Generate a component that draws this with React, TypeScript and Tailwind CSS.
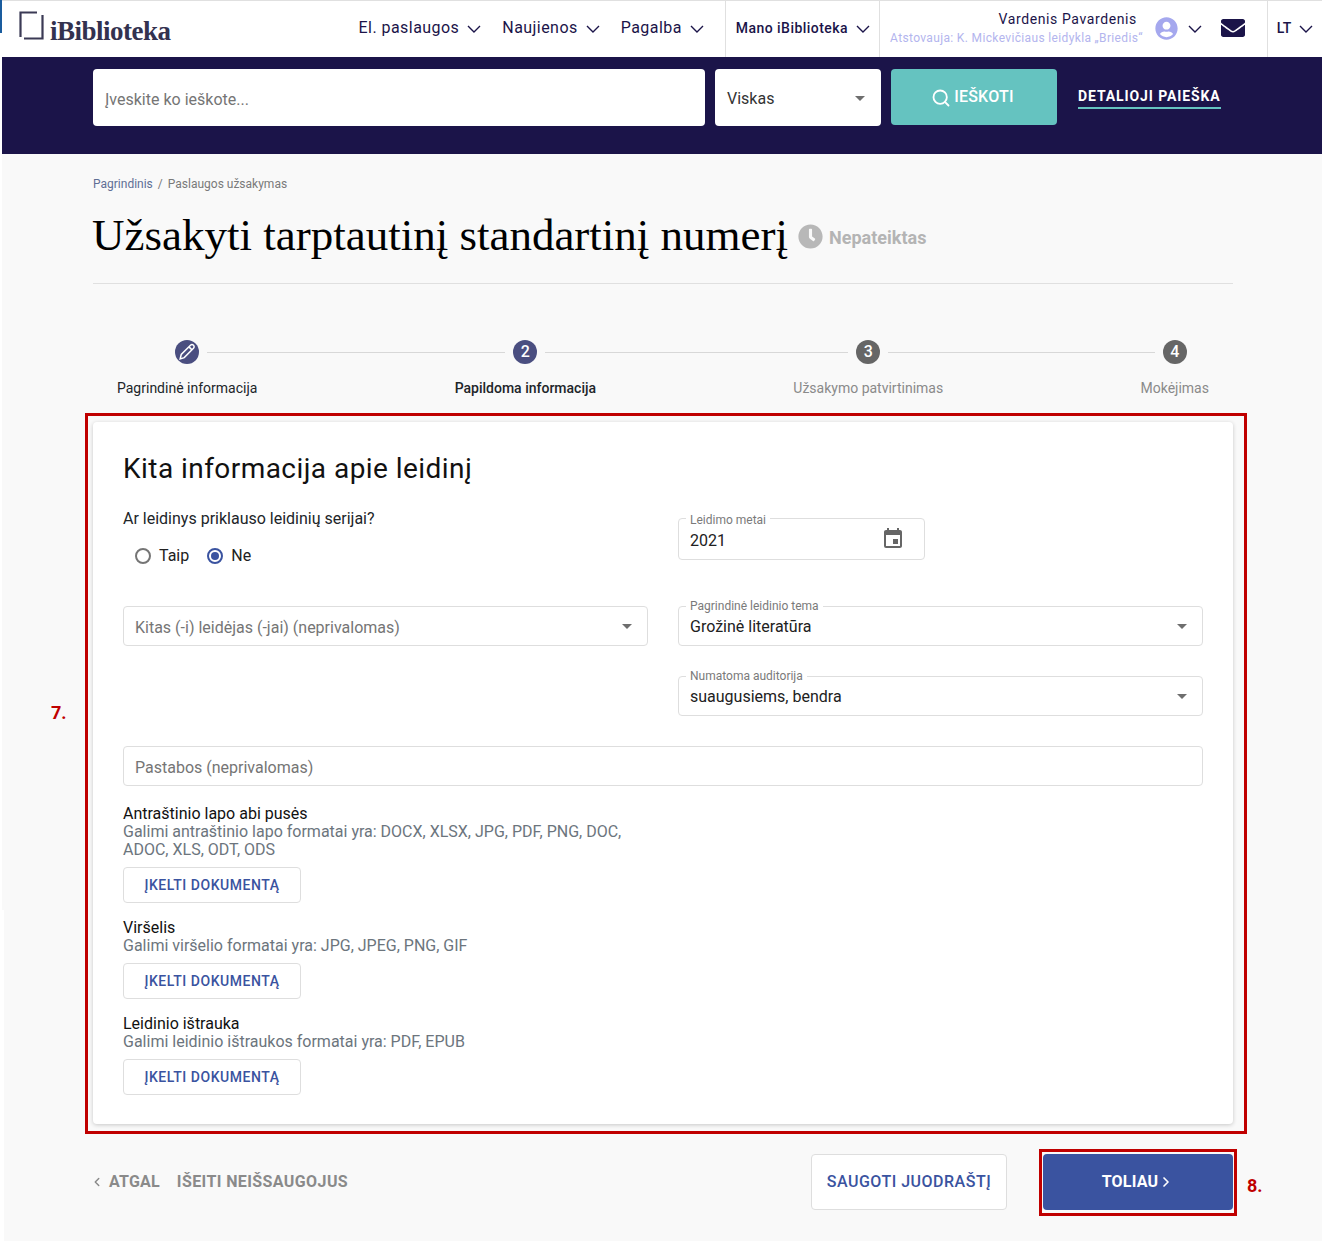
import { ChevronLeft, ChevronRight, Search } from "lucide-react"
import { FaClock, FaEnvelope, FaUserCircle } from "react-icons/fa"
import { MdArrowDropDown, MdEvent } from "react-icons/md"

const navItems = ["El. paslaugos", "Naujienos", "Pagalba"]

const steps = [
  { label: "Pagrindinė informacija", mark: "edit", line: "w-[298px]", tone: "text-[#212529]" },
  { label: "Papildoma informacija", mark: "2", line: "w-[303px]", tone: "text-[#212529] font-medium" },
  { label: "Užsakymo patvirtinimas", mark: "3", line: "w-[267px]", tone: "text-[#8a8a8a]" },
  { label: "Mokėjimas", mark: "4", line: "", tone: "text-[#8a8a8a]" },
]

const uploads = [
  {
    title: "Antraštinio lapo abi pusės",
    hint: "Galimi antraštinio lapo formatai yra: DOCX, XLSX, JPG, PDF, PNG, DOC, ADOC, XLS, ODT, ODS",
  },
  { title: "Viršelis", hint: "Galimi viršelio formatai yra: JPG, JPEG, PNG, GIF" },
  { title: "Leidinio ištrauka", hint: "Galimi leidinio ištraukos formatai yra: PDF, EPUB" },
]

function Chevron({ className = "" }: { className?: string }) {
  return (
    <svg width="14" height="8" viewBox="0 0 14 8" fill="none" stroke="currentColor" strokeWidth="1.4" className={className}>
      <path d="M1 1l6 6 6-6" />
    </svg>
  )
}

function Logo() {
  return (
    <div className="flex items-end">
      <svg width="25" height="29" viewBox="0 0 25 29" fill="none" stroke="#3b3a55" strokeWidth="2.2">
        <path d="M18 1.5H1.5V26" />
        <path d="M23.5 4V27.5H5" />
      </svg>
      <span className="-mb-[4px] ml-[6px] text-[27px] leading-[26px] font-bold tracking-[-0.5px] text-[#33324f] [font-family:'Liberation_Serif',serif]">
        iBiblioteka
      </span>
    </div>
  )
}

function NotchedField({
  label,
  value,
  right,
  className,
  labelClass = "top-[-8px]",
  valueClass = "mt-[2px]",
}: {
  label: string
  value: string
  right: React.ReactNode
  className: string
  labelClass?: string
  valueClass?: string
}) {
  return (
    <div className={`relative flex items-center justify-between rounded border border-[#dedede] bg-white pl-[11px] ${className}`}>
      <span className={`absolute left-[7px] bg-white px-[4px] text-xs leading-[14px] text-[#7a7a7a] ${labelClass}`}>{label}</span>
      <span className={`text-base text-[#212121] ${valueClass}`}>{value}</span>
      {right}
    </div>
  )
}

function SelectArrow() {
  return <MdArrowDropDown className="mr-[8px] text-[24px] text-[#6e6e6e]" />
}

export default function App() {
  return (
    <div className="relative h-[1241px] w-[1322px] overflow-hidden bg-white pl-[2px] text-[#212529] [font-family:Roboto,sans-serif]">
      <div className="absolute top-0 left-0 h-[33px] w-[2px] bg-[#1a5c9e]" />

      {/* top bar */}
      <header className="flex h-[57px] items-stretch border-t border-[#e0e0e0] bg-white">
        <div className="mt-[10px] ml-[17px]">
          <Logo />
        </div>
        <nav className="ml-[188px] flex items-center gap-[21px] pb-[2px]">
          {navItems.map((item) => (
            <span key={item} className="flex items-center gap-[8px] text-base tracking-[0.45px] text-[#1b1449]">
              {item}
              <Chevron className="mt-[1px]" />
            </span>
          ))}
        </nav>
        <div className="ml-[21px] flex w-[155px] items-center gap-[8px] border-x border-[#e0e0e0] pb-[2px] pl-[10px] text-sm font-medium tracking-[0.45px] text-[#1b1449]">
          Mano iBiblioteka
          <Chevron className="mt-[1px]" />
        </div>
        <div className="ml-[11px] flex w-[252px] flex-col items-end pt-[9px]">
          <span className="mr-[6px] text-sm leading-[18px] tracking-[0.6px] text-[#1b1449]">Vardenis Pavardenis</span>
          <span className="text-xs leading-[20px] tracking-[0.35px] whitespace-nowrap text-[#b3b5ee]">
            Atstovauja: K. Mickevičiaus leidykla „Briedis“
          </span>
        </div>
        <div className="ml-[12px] flex items-center pb-[2px]">
          <FaUserCircle className="text-[23px] text-[#a5a8ee]" />
          <Chevron className="mt-[1px] ml-[10px] text-[#1b1449]" />
          <FaEnvelope className="ml-[19px] text-[24px] text-[#1b1449]" />
        </div>
        <div className="ml-[22px] flex flex-1 items-center gap-[8px] border-l border-[#e0e0e0] pb-[2px] pl-[9px] text-sm font-medium text-[#1b1449]">
          LT
          <Chevron className="mt-[1px]" />
        </div>
      </header>

      {/* search */}
      <div className="flex h-[97px] items-start bg-[#1b1449] pt-[12px] pl-[91px]">
        <div className="flex h-[57px] w-[612px] items-center rounded bg-white pt-[5px] pl-[12px] text-base text-[#757575]">
          Įveskite ko ieškote...
        </div>
        <div className="ml-[10px] flex h-[57px] w-[166px] items-center justify-between rounded bg-white pl-[12px] text-base text-[#333]">
          <span className="mt-[2px]">Viskas</span>
          <MdArrowDropDown className="mr-[9px] text-[24px] text-[#6e6e6e]" />
        </div>
        <div className="ml-[10px] flex h-[56px] w-[166px] items-center justify-center gap-[3px] rounded bg-[#65c3c0] pr-[3px] pb-[1px] text-base font-medium tracking-[0.2px] text-white">
          <Search size={20} strokeWidth={2.2} className="mt-[2px]" />
          IEŠKOTI
        </div>
        <div className="mt-[18px] ml-[21px] border-b-2 border-[#65c3c0] pb-[2px] text-sm leading-[18px] font-bold tracking-[0.9px] text-white">
          DETALIOJI PAIEŠKA
        </div>
      </div>

      {/* page */}
      <main className="h-[1087px] bg-[#f9f9f9] pr-[89px] pl-[91px]">
        <div className="flex h-[60px] items-center text-xs text-[#7a7a7a]">
          <span className="text-[#5f6f95]">Pagrindinis</span>
          <span className="mx-[5px]">/</span>
          <span>Paslaugos užsakymas</span>
        </div>

        <div className="flex h-[70px] items-start border-b border-[#e0e0e0]">
          <h1 className="-ml-[1px] text-[45px] leading-[42px] whitespace-nowrap text-black [font-family:'Liberation_Serif',serif]">
            Užsakyti tarptautinį standartinį numerį
          </h1>
          <FaClock className="mt-[10px] ml-[10px] text-[25px] text-[#b8b8b8]" />
          <span className="mt-[13px] ml-[6px] text-lg leading-[22px] font-bold text-[#b4b4b4]">Nepateiktas</span>
        </div>

        {/* stepper */}
        <div className="mt-[56px] flex justify-between px-[24px]">
          {steps.map((step) => (
            <div key={step.label} className="relative flex flex-col items-center">
              <div
                className="flex h-[24px] w-[24px] items-center justify-center rounded-full bg-[#4a4e80] text-base font-medium text-white data-[off=true]:bg-[#666]"
                data-off={step.mark === "3" || step.mark === "4"}
              >
                {step.mark === "edit" ? (
                  <svg width="20" height="20" viewBox="0 0 16 16" fill="none" stroke="white" strokeWidth="1.2">
                    <path d="M2.5 13.5 3.4 10 10.8 2.6a1.6 1.6 0 0 1 2.4 2.4L5.8 12.5Z" />
                    <path d="M9.6 3.9 12 6.3" />
                  </svg>
                ) : (
                  step.mark
                )}
              </div>
              {step.line && <div className={`absolute top-[12px] left-[calc(50%+20px)] h-px bg-[#d8d8d8] ${step.line}`} />}
              <span className={`mt-[14px] text-sm leading-[20px] whitespace-nowrap ${step.tone}`}>{step.label}</span>
            </div>
          ))}
        </div>

        {/* form */}
        <section className="mt-[24px] h-[702px] rounded bg-white px-[30px] pt-[29px] shadow-[0_1px_4px_rgba(0,0,0,0.2)]">
          <h2 className="text-[28px] leading-[36px] tracking-[0.45px] text-[#111]">Kita informacija apie leidinį</h2>

          <div className="mt-[31px] grid grid-cols-2 gap-x-[30px] gap-y-[30px]">
            <div className="-mt-[9px] -mb-[30px] h-[88px]">
              <p className="text-base leading-[20px] text-[#212529]">Ar leidinys priklauso leidinių serijai?</p>
              <div className="mt-[17px] ml-[12px] flex items-center text-base leading-[20px] text-[#212121]">
                <span className="h-[16px] w-[16px] rounded-full border-2 border-[#757575]" />
                <span className="ml-[8px]">Taip</span>
                <span className="ml-[18px] flex h-[16px] w-[16px] items-center justify-center rounded-full border-2 border-[#3a53a0]">
                  <span className="h-[8px] w-[8px] rounded-full bg-[#3a53a0]" />
                </span>
                <span className="ml-[8px]">Ne</span>
              </div>
            </div>
            <div className="-mb-[30px] h-[88px]">
              <NotchedField
                label="Leidimo metai"
                value="2021"
                className="h-[42px] w-[247px]"
                labelClass="top-[-6px]"
                valueClass="mt-[4px]"
                right={<MdEvent className="mr-[19px] text-[24px] text-[#666]" />}
              />
            </div>

            <div className="flex h-[40px] items-center justify-between rounded border border-[#dedede] bg-white pl-[11px] text-base text-[#757575]">
              <span className="mt-[4px]">Kitas (-i) leidėjas (-jai) (neprivalomas)</span>
              <SelectArrow />
            </div>
            <NotchedField label="Pagrindinė leidinio tema" value="Grožinė literatūra" className="h-[40px]" right={<SelectArrow />} />

            <div />
            <NotchedField label="Numatoma auditorija" value="suaugusiems, bendra" className="h-[40px]" right={<SelectArrow />} />

            <div className="col-span-2 flex h-[40px] items-center rounded border border-[#dedede] bg-white pl-[11px] text-base text-[#757575]">
              <span className="mt-[4px]">Pastabos (neprivalomas)</span>
            </div>
          </div>

          <div className="mt-[19px] flex flex-col gap-[16px]">
            {uploads.map((item) => (
              <div key={item.title}>
                <p className="text-base leading-[18px] text-[#111]">{item.title}</p>
                <p className="w-[525px] text-base leading-[18px] text-[#6c757d]">{item.hint}</p>
                <div className="mt-[8px] flex h-[36px] w-[178px] items-center justify-center rounded border border-[#dedede] bg-white text-sm font-medium tracking-[0.55px] text-[#3a53a0]">
                  ĮKELTI DOKUMENTĄ
                </div>
              </div>
            ))}
          </div>
        </section>

        {/* actions */}
        <div className="mt-[30px] flex items-center">
          <span className="flex items-center text-base font-bold tracking-[0.2px] text-[#8a8a8a]">
            <ChevronLeft size={14} strokeWidth={2.5} className="mr-[5px] -ml-[3px]" />
            ATGAL
          </span>
          <span className="ml-[17px] text-base font-bold tracking-[0.4px] text-[#8a8a8a]">IŠEITI NEIŠSAUGOJUS</span>
          <div className="ml-auto flex h-[56px] w-[196px] items-center justify-center rounded border border-[#dedede] bg-white text-base font-medium tracking-[0.5px] text-[#3a53a0]">
            SAUGOTI JUODRAŠTĮ
          </div>
          <div className="ml-[36px] flex h-[56px] w-[190px] items-center justify-center rounded bg-[#3a53a0] text-base font-bold tracking-[0.2px] text-white">
            TOLIAU
            <ChevronRight size={16} strokeWidth={2.5} />
          </div>
        </div>
      </main>

      {/* annotations laid over the page */}
      <div className="absolute top-[413px] left-[85px] h-[721px] w-[1162px] border-[3px] border-[#c00000]" />
      <div className="absolute top-[1149px] left-[1039px] h-[67px] w-[198px] border-[3px] border-[#c00000]" />
      <span className="absolute top-[703px] left-[51px] text-lg leading-[20px] font-bold text-[#c00000]">7.</span>
      <span className="absolute top-[1176px] left-[1247px] text-lg leading-[20px] font-bold text-[#c00000]">8.</span>
      <div className="absolute top-[910px] left-0 h-[331px] w-[4px] bg-white" />
    </div>
  )
}
